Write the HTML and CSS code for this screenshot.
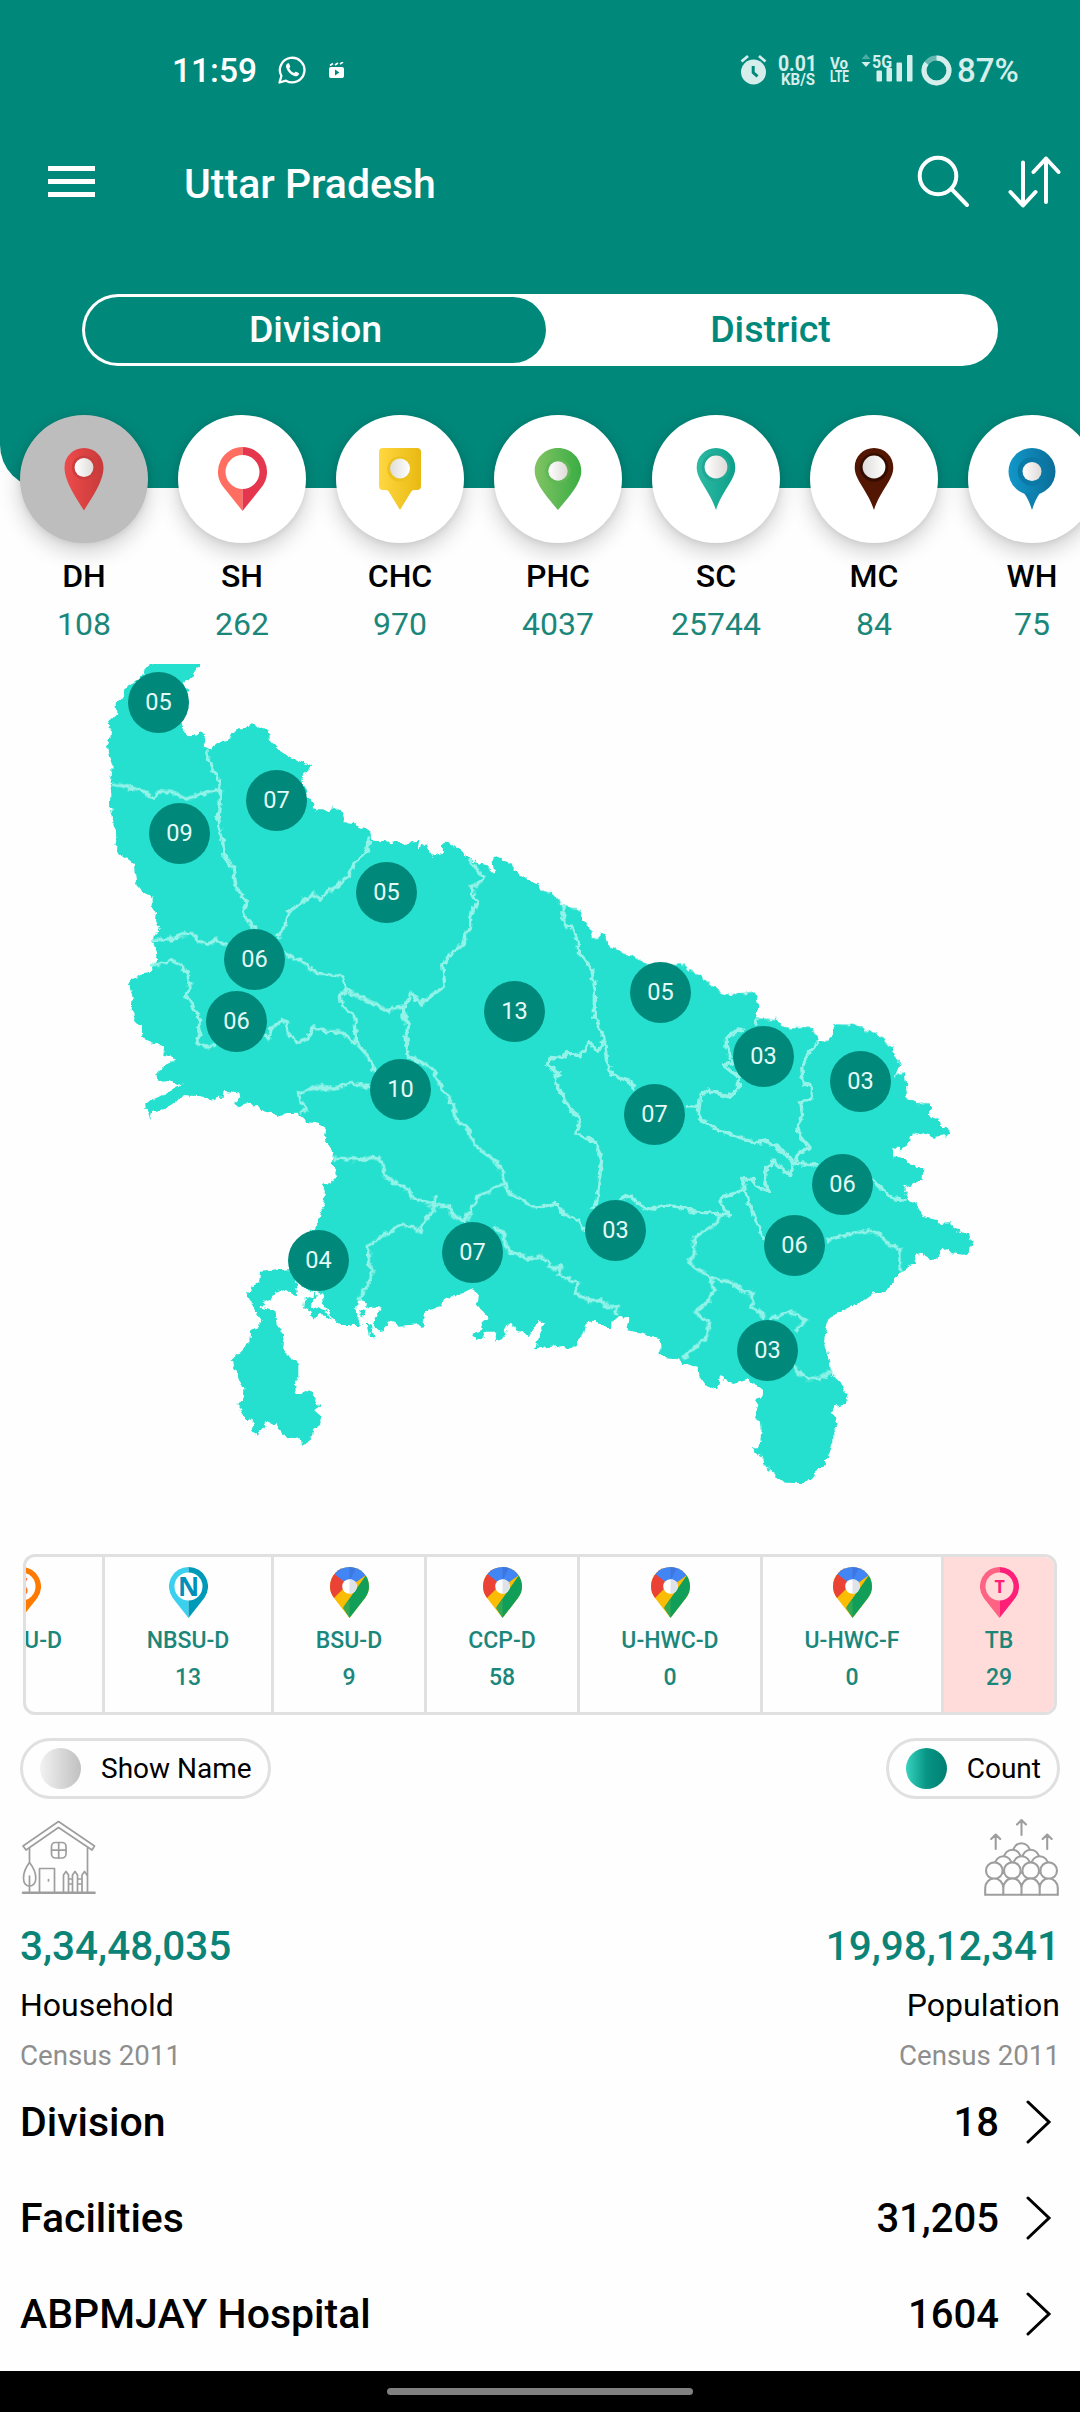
FILE: index.html
```html
<!DOCTYPE html>
<html lang="en">
<head>
<meta charset="utf-8">
<title>Uttar Pradesh</title>
<link rel="stylesheet" href="styles.css">
</head>
<body>
<svg class="defs" width="0" height="0" aria-hidden="true">
  <defs>
    <linearGradient id="red"><stop offset="0" stop-color="#ee4b4b"/><stop offset="1" stop-color="#c83a3a"/></linearGradient>
    <linearGradient id="yellow"><stop offset="0" stop-color="#ffd740"/><stop offset="1" stop-color="#e8b912"/></linearGradient>
    <linearGradient id="green"><stop offset="0" stop-color="#81c364"/><stop offset="1" stop-color="#3aad43"/></linearGradient>
    <linearGradient id="teal"><stop offset="0" stop-color="#2fbaa4"/><stop offset="1" stop-color="#0b9f8a"/></linearGradient>
    <linearGradient id="blue"><stop offset="0" stop-color="#1098c9"/><stop offset="1" stop-color="#0c6d99"/></linearGradient>
    <linearGradient id="pearl"><stop offset="0" stop-color="#fff"/><stop offset="1" stop-color="#dedbd8"/></linearGradient>
    <linearGradient id="pearlR"><stop offset="0" stop-color="#deddda"/><stop offset="1" stop-color="#fff"/></linearGradient>
    <clipPath id="gpinClip"><path d="M19.500 0C8.500 0 0 8.500 0 19.500C0 24 1.500 27.500 4 31L19.500 51L35 31C37.500 27.500 39 24 39 19.500C39 8.500 30.500 0 19.500 0Z"/></clipPath>
    <symbol id="gpin" viewBox="0 0 39 51">
      <g clip-path="url(#gpinClip)">
        <rect width="39" height="51" fill="#fbbc04"/>
        <path d="M0 0H10L19 16L3 32L0 30Z" fill="#ea4335"/>
        <path d="M5 7.500L14 14.500L21 19L36 8L30 0H5Z" fill="#4285f4"/>
        <path d="M19.500 0V14L26 1Z" fill="#3c78e0"/>
        <path d="M36.500 7.500L13.500 40L19.500 51L39 31V8Z" fill="#119e59"/>
        <path d="M19.500 33L13 41L19.500 51Z" fill="#34a853"/>
      </g>
      <circle cx="19.500" cy="19.500" r="7.300" fill="#fff"/>
      <path d="M19.500 12.200a7.300 7.300 0 0 1 0 14.600Z" fill="#dfe3e9"/>
    </symbol>
  </defs>
</svg>

<header class="header">
  <div class="status">
    <span class="time">11:59</span>
    <svg class="whatsapp" viewBox="0 0 28 28"><path d="M1.500 26.500L3.400 20A12.300 12.300 0 1 1 8 24.700Z" fill="none" stroke="#fff" stroke-width="2.300" stroke-linejoin="round"/><path d="M9.500 7.500c-1.400 1-1.800 2.300-1.300 4 1.200 4 4.300 7.100 8.300 8.600 1.800.6 3.500 0 4.300-1.600.3-.6.300-1.200-.2-1.500l-2.600-1.300c-.5-.2-.8 0-1.800 1.300-2.300-.9-4-2.600-5-4.800.8-.8 1.200-1.300 1-1.900l-1.200-2.700c-.3-.5-.9-.5-1.500-.1Z" fill="#fff"/></svg>
    <svg class="clapper" viewBox="0 0 15 16"><rect y="5" width="15" height="11" rx="2" fill="#fff"/><path d="M1 3.500l3-2M6 3l3-2M11 2l3-2" stroke="#fff" stroke-width="1.600"/><path d="M6 7.500V13.500L10.500 10.500Z" fill="#00897b"/></svg>
    <div class="sys">
      <svg width="28" height="32" viewBox="0 0 28 32"><circle cx="13.500" cy="18" r="12.500" fill="#d5eeeb"/><path d="M1.500 7.500L8 2M25.500 7.500L19 2" stroke="#d5eeeb" stroke-width="2.800"/><path d="M13.200 12v6.500l4.300 3.800" fill="none" stroke="#00897b" stroke-width="3"/></svg>
      <svg class="net" width="137" height="40" viewBox="0 0 137 40">
        <g fill="#d5eeeb">
          <text class="n1" x="0" y="21" textLength="39" lengthAdjust="spacingAndGlyphs">0.01</text>
          <text class="n2" x="3" y="35" textLength="34" lengthAdjust="spacingAndGlyphs">KB/S</text>
          <text class="n3" x="52" y="19" textLength="18" lengthAdjust="spacingAndGlyphs">Vo</text>
          <text class="n3" x="52" y="32" textLength="19" lengthAdjust="spacingAndGlyphs">LTE</text>
          <text class="n4" x="94" y="17.500" textLength="20" lengthAdjust="spacingAndGlyphs">5G</text>
          <path d="M83.500 12L92.500 12L88 17Z"/>
          <path d="M83.500 9L92.500 9L88 4Z" opacity=".35"/>
          <rect x="98.500" y="20.500" width="5.500" height="11" rx="1"/><rect x="108.500" y="18" width="5.500" height="13.500" rx="1"/><rect x="118.500" y="12.500" width="5.500" height="19" rx="1"/><rect x="129" y="5" width="5.500" height="26.500" rx="1"/>
        </g>
      </svg>
      <svg width="31" height="31" viewBox="0 0 31 31"><circle cx="15.500" cy="15.500" r="12.500" fill="none" stroke="#66b8b0" stroke-width="5"/><circle cx="15.500" cy="15.500" r="12.500" fill="none" stroke="#d5eeeb" stroke-width="5" pathLength="100" stroke-dasharray="85 15" transform="rotate(-90 15.500 15.500)"/></svg>
      <span class="battery">87%</span>
    </div>
  </div>
  <div class="appbar">
    <div class="menu"><i></i><i></i><i></i></div>
    <h1>Uttar Pradesh</h1>
    <svg class="search" viewBox="0 0 54 54"><circle cx="21" cy="21" r="18.300" fill="none" stroke="#fff" stroke-width="4"/><path d="M34.500 34L50 50" stroke="#fff" stroke-width="4" stroke-linecap="round"/></svg>
    <svg class="sort" viewBox="0 0 54 54"><path d="M15 7.500V50M2.500 37L15 50.500L27.500 37M38 47V3.500M25.500 17L38 3.500L50.500 17" fill="none" stroke="#fff" stroke-width="4" stroke-linecap="round" stroke-linejoin="round"/></svg>
  </div>
  <div class="segment"><span class="on">Division</span><span>District</span></div>
</header>

<nav class="types">
  <div class="type"><div class="disc selected"><svg viewBox="0 0 64 64"><path d="M32 1C21 1 12.500 9.500 12.500 20.500C12.500 35 25 52 32 63.500C39 52 51.500 35 51.500 20.500C51.500 9.500 43 1 32 1Z" fill="url(#red)"/><circle cx="32" cy="20.500" r="12" fill="#cb3d3d"/><circle cx="32" cy="20.500" r="9.400" fill="url(#pearl)"/></svg></div><b>DH</b><span>108</span></div>
  <div class="type"><div class="disc"><svg viewBox="0 0 64 64"><path d="M32.500 0A24.700 24.700 0 0 0 12.500 39L32.500 64Z" fill="#ff6e60"/><path d="M32.500 0A24.700 24.700 0 0 1 52.500 39L32.500 64Z" fill="#e4374e"/><circle cx="32.500" cy="25" r="17" fill="#fff"/></svg></div><b>SH</b><span>262</span></div>
  <div class="type"><div class="disc"><svg viewBox="0 0 64 64"><path d="M15 1H49Q53 1 53 5V39Q53 43 49 43H46Q44 43 43 45L32 63L21 45Q20 43 18 43H15Q11 43 11 39V5Q11 1 15 1Z" fill="url(#yellow)"/><circle cx="32" cy="22" r="12.800" fill="#edc11e"/><circle cx="32" cy="21.500" r="10" fill="url(#pearlR)"/></svg></div><b>CHC</b><span>970</span></div>
  <div class="type"><div class="disc"><svg viewBox="0 0 64 64"><path d="M32 1C19 1 8.700 11 8.700 24C8.700 37 23 52 32 63C41 52 55.300 37 55.300 24C55.300 11 45 1 32 1Z" fill="url(#green)"/><circle cx="32" cy="24" r="12.500" fill="#5fb855"/><circle cx="32" cy="24" r="9.700" fill="url(#pearl)"/></svg></div><b>PHC</b><span>4037</span></div>
  <div class="type"><div class="disc"><svg viewBox="0 0 64 64"><path d="M32 1C21 1 12.700 9.500 12.700 20.500C12.700 33 26 44 32 63C38 44 51.300 33 51.300 20.500C51.300 9.500 43 1 32 1Z" fill="url(#teal)"/><circle cx="32" cy="20.500" r="14.200" fill="#1fa893"/><circle cx="32" cy="20" r="11.400" fill="url(#pearl)"/></svg></div><b>SC</b><span>25744</span></div>
  <div class="type"><div class="disc"><svg viewBox="0 0 64 64"><path d="M32 1C21 1 12.700 9.500 12.700 20.500C12.700 33 26 44 32 63C38 44 51.300 33 51.300 20.500C51.300 9.500 43 1 32 1Z" fill="#521602"/><circle cx="32" cy="20.500" r="14.200" fill="#340d00"/><circle cx="32" cy="20" r="11.400" fill="url(#pearlR)"/></svg></div><b>MC</b><span>84</span></div>
  <div class="type"><div class="disc"><svg viewBox="0 0 64 64"><circle cx="32" cy="24.500" r="23.500" fill="url(#blue)"/><path d="M24 46Q29 53 32 63Q35 53 40 46Z" fill="#0e80af"/><circle cx="32" cy="24.500" r="14.300" fill="#0b79a6"/><circle cx="32" cy="24.500" r="9.500" fill="url(#pearl)"/></svg></div><b>WH</b><span>75</span></div>
</nav>

<section class="map">
  <svg width="1080" height="850" viewBox="0 664 1080 850">
    <defs>
      <filter id="rough" filterUnits="userSpaceOnUse" x="0" y="650" width="1080" height="870" color-interpolation-filters="sRGB">
        <feTurbulence type="fractalNoise" baseFrequency=".16" numOctaves="2" seed="4"/>
        <feDisplacementMap in="SourceGraphic" scale="7" xChannelSelector="R" yChannelSelector="G"/>
      </filter>
      <clipPath id="top"><rect x="0" y="664" width="1080" height="850"/></clipPath>
    </defs>
    <g clip-path="url(#top)">
    <g filter="url(#rough)">
      <g fill="#26e0cf">
        <path transform="translate(80 650) scale(.33333)" d="M228 20L376 20L340 75L312 96L330 150L303 225L325 260L362 243L378 270L368 292L393 300L402 285L450 264L462 238L490 238L515 223L565 240L570 270L600 305L635 325L697 348L668 375L668 395L685 440L708 480L750 482L760 470L790 490L795 520L825 522L870 540L877 572L912 574L922 566L930 580L960 575L978 588L1018 565L1014 598L1035 585L1060 620L1088 605L1090 578L1110 580L1145 605L1165 620L1185 637L1215 645L1243 672L1237 625L1260 620L1270 640L1295 650L1320 675L1345 692L1380 706L1380 1380L545 1380L525 1355L500 1360L478 1372L465 1362L485 1340L470 1328L430 1326L428 1340L408 1340L403 1358L390 1340L310 1335L295 1345L260 1365L218 1372L200 1380L195 1360L240 1340L275 1320L312 1300L290 1305L270 1292L245 1295L228 1272L262 1268L265 1250L285 1233L275 1220L250 1215L252 1190L225 1178L205 1175L187 1160L185 1125L168 1118L155 1080L158 1040L148 1010L142 995L185 970L210 965L230 935L232 915L225 890L217 870L225 850L240 832L225 810L228 790L218 770L218 740L185 725L170 705L165 670L160 640L125 615L108 600L112 570L102 540L98 500L90 460L92 400L98 350L85 310L80 285L92 262L92 240L82 228L97 205L112 190L110 165L130 135L140 110L160 100L190 75L195 60Z"/>
        <path transform="translate(500 800) scale(.33333)" d="M0 175L35 190L45 218L75 235L105 260L112 252L125 270L155 280L175 300L190 318L240 327L250 360L275 390L275 415L298 412L300 398L315 405L325 435L370 460L400 468L435 490L480 500L545 492L565 510L590 518L670 585L765 575L775 620L768 655L830 657L845 675L875 682L925 680L952 705L957 725L985 722L1002 700L1000 672L1070 675L1160 720L1160 735L1182 735L1175 755L1200 785L1188 825L1215 820L1222 895L1245 905L1255 915L1290 910L1290 955L1318 955L1325 985L1350 990L1340 1005L1300 1010L1235 997L1200 1000L0 1000Z"/>
        <path transform="translate(100 1060) scale(.33333)" d="M228 0L205 12L165 42L190 62L235 65L250 72L245 85L215 95L180 112L140 130L135 145L145 158L150 178L158 155L200 145L230 125L242 103L330 112L345 125L350 110L368 108L370 95L415 98L425 110L402 130L418 143L430 128L455 128L490 150L535 170L560 160L590 158L620 185L660 192L678 205L675 240L700 275L695 310L712 335L690 370L668 375L675 400L665 415L678 432L660 455L655 480L640 505L600 560L570 627L480 635L478 665L450 685L443 705L460 745L488 785L450 815L448 848L392 902L412 935L430 985L428 1020L415 1035L428 1065L462 1085L450 1108L470 1130L500 1083L530 1098L565 1138L600 1135L603 1160L630 1145L640 1110L660 1095L663 1068L642 1050L657 1040L645 1005L632 988L605 1005L588 1000L585 975L595 955L595 910L560 885L545 855L550 820L535 805L525 750L485 742L490 730L515 715L530 695L560 685L580 710L592 705L585 660L620 690L668 700L672 740L720 795L785 795L768 755L770 725L782 715L805 745L845 742L815 790L848 818L870 785L900 797L955 793L970 805L975 755L1020 742L1035 712L1065 712L1115 685L1135 700L1130 730L1170 775L1145 790L1148 808L1115 828L1145 838L1160 815L1195 815L1185 845L1205 838L1220 820L1210 805L1235 790L1245 810L1290 825L1305 800L1315 780L1340 790L1322 830L1305 865L1380 858L1380 0ZM615 720L650 700L632 740L680 755L700 785L675 765L655 762L640 782L635 755L612 745ZM780 745L800 750L795 775L778 768ZM800 790L815 795L812 820L828 830L808 835Z"/>
        <path transform="translate(540 1100) scale(.33333)" d="M-20 0L1110 0L1125 20L1165 10L1172 55L1195 60L1205 85L1228 90L1225 102L1185 110L1115 97L1110 130L1085 148L1058 145L1060 172L1100 178L1115 195L1150 205L1148 240L1120 250L1093 262L1105 300L1130 315L1150 350L1190 360L1200 372L1230 370L1235 385L1290 405L1300 435L1275 465L1235 460L1220 445L1205 448L1195 478L1160 475L1150 458L1125 468L1128 490L1075 520L1050 565L1025 578L1000 580L965 605L910 630L865 655L852 720L870 790L872 815L905 850L922 885L915 910L885 918L875 940L895 970L880 990L880 1025L865 1070L848 1100L832 1105L825 1130L790 1150L735 1148L690 1110L672 1095L670 1070L640 1055L638 1045L658 1045L665 990L662 960L645 955L655 915L645 900L672 885L658 860L620 840L580 852L540 832L532 868L500 858L480 830L470 800L430 790L415 778L375 775L362 760L360 715L260 690L265 655L235 648L215 665L212 688L160 662L138 670L132 705L115 715L110 735L92 750L70 735L-15 745L5 685L18 670L0 658Z"/>
      </g>
      <g class="borders">
        <path transform="translate(80 650) scale(.33333)" d="M95 402L140 410L185 422L220 442L245 422L278 428L318 448L355 435L395 422L422 424M380 300L385 330L405 370L422 415L420 460L413 510L425 560L435 620L460 655L468 710L500 755L488 785L505 815L530 838M868 560L862 605L830 630L805 680L770 708L720 745L697 732L655 765L622 788L615 830L595 862M218 870L285 865L300 855L338 850L355 872L385 883L410 868L440 885M210 945L240 942L272 930L308 948L325 975L330 1005L318 1035L340 1070L355 1100L360 1140L350 1180L370 1190L405 1185M552 1150L565 1170L575 1135L605 1110L620 1120L625 1150L655 1178L685 1165L700 1130L740 1145L778 1145L830 1180L870 1225L885 1265M618 912L660 930L710 970L785 980L805 1020L780 1035L785 1065L825 1105L830 1180M805 1025L860 1050L920 1082L965 1068L985 1120L978 1160L985 1220L1060 1255M1168 628L1185 650L1210 685L1195 705L1170 708L1190 760L1172 800L1172 835L1155 850L1150 880L1110 915L1088 945L1095 1010L1040 1045L1025 1062L992 1030L980 1060L968 1080L970 1110L985 1125M870 1310L810 1300L760 1315L700 1312L655 1328L660 1355L682 1378L660 1390"/>
        <path transform="translate(500 800) scale(.33333)" d="M190 318L188 350L200 380L215 382L235 425L235 455L275 505L283 560L283 650L312 715L320 780L335 825L385 840L405 868M312 720L292 755L268 725L240 768L200 758L188 775L150 772L142 795L180 820L160 830L200 910L240 960L228 1000L285 1025L305 1080L300 1120L290 1210L272 1230M105 1227L165 1210L190 1240L235 1260L255 1297M768 655L770 680M735 695L710 690L680 715L678 740L700 790L668 795L715 830L715 865L685 890L625 872L602 885L595 940L600 955L655 992L770 1028L800 1022L850 1055L880 1092M558 920L598 922M955 725L920 770L905 800L910 850L935 860L932 900L902 905L908 945L892 970L900 1010L930 1045L895 1055L885 1090L950 1095M880 1095L868 1125L820 1080L800 1105L795 1150L805 1170L775 1165L755 1138L725 1135L735 1160L705 1180L662 1190L668 1220L688 1245L640 1240L580 1235L540 1220L485 1218L440 1230L415 1210L385 1185L360 1200M735 1165L750 1220L770 1260L780 1300L795 1317M1120 1140L1175 1195L1220 1202"/>
        <path transform="translate(100 1060) scale(.33333)" d="M975 15L1000 30L1020 75L1060 135L1070 185L1100 200L1120 250L1160 285L1200 315L1212 368L1230 400L1270 420L1305 447M700 295L790 298L835 290L850 320L855 350L925 390L940 415L1000 435L1050 438L1055 465L1095 485M1212 368L1180 385L1135 410L1112 450L1095 490M1005 405L1000 455L965 490L960 515L935 500L900 495L865 520L820 545L805 560L805 610L820 635L800 680L775 720M1180 500L1212 520L1215 555L1230 575L1280 595L1320 590"/>
        <path transform="translate(540 1100) scale(.33333)" d="M0 470L25 485L35 505L65 500L55 525L115 550L105 580L145 600L185 600L195 620L235 618L225 645M540 345L525 375L465 410L462 465L445 490L510 530L580 550L610 575L640 578L632 625L665 635L670 658M510 530L520 570L505 605L465 635L505 670L505 705L430 775M690 658L745 635L800 660L765 695M768 800L770 815L800 835L840 835L875 815M860 420L920 405L985 392L1015 400L1045 430L1080 450L1080 515"/>
      </g>
    </g>
    </g>
  </svg>
  <span class="pin" style="left:159px;top:38px">05</span>
  <span class="pin" style="left:277px;top:136px">07</span>
  <span class="pin" style="left:180px;top:169px">09</span>
  <span class="pin" style="left:387px;top:228px">05</span>
  <span class="pin" style="left:255px;top:295px">06</span>
  <span class="pin" style="left:237px;top:357px">06</span>
  <span class="pin" style="left:515px;top:347px">13</span>
  <span class="pin" style="left:401px;top:425px">10</span>
  <span class="pin" style="left:661px;top:328px">05</span>
  <span class="pin" style="left:764px;top:392px">03</span>
  <span class="pin" style="left:861px;top:417px">03</span>
  <span class="pin" style="left:655px;top:450px">07</span>
  <span class="pin" style="left:843px;top:520px">06</span>
  <span class="pin" style="left:616px;top:566px">03</span>
  <span class="pin" style="left:795px;top:581px">06</span>
  <span class="pin" style="left:473px;top:588px">07</span>
  <span class="pin" style="left:319px;top:596px">04</span>
  <span class="pin" style="left:768px;top:686px">03</span>
</section>

<section class="units">
  <div class="unit cut"><svg viewBox="0 0 39 51"><path d="M19.500 0A19.500 19.500 0 0 0 3.700 31L19.500 51L35.300 31A19.500 19.500 0 0 0 19.500 0Z" fill="#ff7a00"/><circle cx="19.500" cy="19.500" r="14" fill="#fff"/><text class="mark" x="19.500" y="28.500" fill="#ff7a00">S</text></svg><b>U-D</b></div>
  <div class="unit w2"><svg viewBox="0 0 39 51"><path d="M19.500 0A19.500 19.500 0 0 0 3.700 31L19.500 51Z" fill="#3bd1ee"/><path d="M19.500 0A19.500 19.500 0 0 1 35.300 31L19.500 51Z" fill="#0099b8"/><circle cx="19.500" cy="19.500" r="14" fill="#fff"/><text class="mark" x="19.500" y="28.800" fill="#008fb8">N</text></svg><b>NBSU-D</b><b>13</b></div>
  <div class="unit w3"><svg><use href="#gpin"/></svg><b>BSU-D</b><b>9</b></div>
  <div class="unit w3"><svg><use href="#gpin"/></svg><b>CCP-D</b><b>58</b></div>
  <div class="unit w4"><svg><use href="#gpin"/></svg><b>U-HWC-D</b><b>0</b></div>
  <div class="unit w5"><svg><use href="#gpin"/></svg><b>U-HWC-F</b><b>0</b></div>
  <div class="unit w6 tb"><svg viewBox="0 0 39 51"><path d="M19.500 0A19.500 19.500 0 0 0 3.700 31L19.500 51Z" fill="#ff6384"/><path d="M19.500 0A19.500 19.500 0 0 1 35.300 31L19.500 51Z" fill="#ff1f78"/><circle cx="19.500" cy="19.500" r="14" fill="#ffdcda"/><text class="mark t" x="19.800" y="26" fill="#ff1f78">T</text></svg><b>TB</b><b>29</b></div>
</section>

<div class="toggles">
  <div class="toggle"><i></i>Show Name</div>
  <div class="toggle active"><i></i>Count</div>
</div>

<section class="stats">
  <div>
    <svg viewBox="20 1816 78 82" width="78" height="82"><g class="line"><path d="M23 1846L58.500 1821.500L94.500 1846L92 1850L58.500 1827.500L26 1850Z"/><path d="M29.500 1848V1862M29.500 1886V1892M87.500 1848V1892"/><rect x="51.500" y="1842.500" width="14.500" height="15.500" rx="4"/><path d="M58.700 1842.500V1858M51.500 1850.200H66"/><path d="M39.500 1892V1868.500H54.500V1892"/><path d="M29.500 1862.500C26 1867 23.500 1873 23.500 1878C23.500 1883 26 1886 29.500 1886S35.800 1883 35.800 1878C35.800 1873 33 1867 29.500 1862.500Z"/><path d="M29.500 1876V1886M63.500 1892V1875L66 1871.500L68.500 1875V1892M72.500 1892V1875L75 1871.500L77.500 1875V1892M82 1892V1875L84.500 1871.500L87 1875M68.500 1879H72.500M68.500 1884H72.500M77.500 1879H82M77.500 1884H82M48.500 1879.500V1881"/><path d="M23 1892.700H94.500" stroke-width="2.600"/></g></svg>
    <strong>3,34,48,035</strong><p>Household</p><small>Census 2011</small>
  </div>
  <div class="right">
    <svg viewBox="14 6 76 82" width="76" height="82"><g class="line people"><circle cx="51.500" cy="41.500" r="8.300"/><circle cx="42.300" cy="48" r="8.300"/><circle cx="60.700" cy="48" r="8.300"/><circle cx="33.300" cy="54.500" r="8.300"/><circle cx="51.700" cy="54.500" r="8.300"/><circle cx="69.700" cy="54.500" r="8.300"/><circle cx="24.300" cy="60.700" r="8.300"/><circle cx="42.300" cy="60.700" r="8.300"/><circle cx="60.700" cy="60.700" r="8.300"/><circle cx="78.700" cy="60.700" r="8.300"/><path d="M15.200 85V78A9 9.500 0 0 1 33.300 78V85M33.300 78A9 9.500 0 0 1 51.500 78V85M51.500 78A9 9.500 0 0 1 69.700 78V85M69.700 78A9 9.500 0 0 1 87.800 78V85M15.200 84.700H87.800"/><path d="M51.500 25V10M47 14.500L51.500 10L56 14.500M25.700 39V24.500M21.200 29L25.700 24.500L30.200 29M77.200 39V24.500M72.700 29L77.200 24.500L81.700 29" fill="none"/></g></svg>
    <strong>19,98,12,341</strong><p>Population</p><small>Census 2011</small>
  </div>
</section>

<section class="rows">
  <div class="row"><span>Division</span><span class="value">18</span><svg viewBox="0 0 26 44"><path d="M2 2L23 22L2 42"/></svg></div>
  <div class="row"><span>Facilities</span><span class="value">31,205</span><svg viewBox="0 0 26 44"><path d="M2 2L23 22L2 42"/></svg></div>
  <div class="row"><span>ABPMJAY Hospital</span><span class="value">1604</span><svg viewBox="0 0 26 44"><path d="M2 2L23 22L2 42"/></svg></div>
</section>

<footer class="navbar"><i></i></footer>
</body>
</html>
```
FILE: styles.css
```css
* { box-sizing: border-box; }

body {
  margin: 0;
  width: 1080px;
  height: 2412px;
  overflow: hidden;
  display: flex;
  flex-direction: column;
  background: #fefefe;
  color: #000;
  font-family: Roboto, "Liberation Sans", sans-serif;
}
body > * { flex: none; }
svg { display: block; }
b { font-weight: 500; }

.defs { height: 0; }

/* Header */
.header {
  height: 488px;
  background: #00897b;
  border-radius: 0 0 43px 43px;
  color: #fff;
}
.status {
  height: 140px;
  padding: 0 61px 0 172px;
  display: flex;
  align-items: center;
}
.time { font-size: 33.5px; font-weight: 500; width: 106px; }
.whatsapp { width: 28px; height: 28px; }
.clapper { width: 15px; height: 16px; margin-left: 23px; }
.sys { margin-left: auto; display: flex; align-items: center; }
.net { margin: 0 6px 0 10px; }
.net text { font-weight: 700; }
.n1 { font-size: 22px; }
.n2 { font-size: 17px; }
.n3 { font-size: 17px; }
.n4 { font-size: 18px; }
.battery { font-size: 33px; font-weight: 500; color: #d5eeeb; margin-left: 5px; width: 62px; }

.appbar {
  height: 84px;
  padding: 0 18px 0 48px;
  display: flex;
  align-items: center;
}
.menu { width: 47px; margin-top: -1px; display: grid; gap: 8px; }
.menu i { height: 5px; background: #fff; }
h1 { margin: 3px auto 0 89px; font-size: 41px; font-weight: 500; }
.search { width: 54px; height: 54px; margin-right: 37px; }
.sort { width: 54px; height: 54px; }

.segment {
  margin: 70px 82px 0;
  height: 72px;
  padding: 3px;
  border-radius: 36px;
  background: #fff;
  display: grid;
  grid-template-columns: 461px 1fr;
  font-size: 37.5px;
  font-weight: 500;
  line-height: 65px;
  text-align: center;
  color: #00897b;
}
.segment .on { background: #00897b; color: #fff; border-radius: 33px; }

/* Facility types */
.types { margin: -73px 0 0 5px; display: flex; }
.type {
  flex: none;
  width: 158px;
  display: flex;
  flex-direction: column;
  align-items: center;
  font-size: 32px;
  line-height: 48px;
}
.type span { color: #1b877b; }
.disc {
  width: 128px;
  height: 128px;
  margin-bottom: 9px;
  border-radius: 50%;
  background: #fff;
  box-shadow: 0 8px 22px rgba(0, 0, 0, .2), 0 1px 6px rgba(0, 0, 0, .08);
  display: grid;
  place-items: center;
}
.disc.selected { background: #bdbdbd; }
.disc svg { width: 64px; height: 64px; }

/* Map */
.map { position: relative; height: 890px; margin-top: 16px; }
.borders { fill: none; stroke: #93f3e9; stroke-width: 10; stroke-linejoin: round; }
.pin {
  position: absolute;
  width: 61px;
  height: 61px;
  margin: -30px 0 0 -31px;
  border-radius: 50%;
  background: #00897b;
  color: #e3fbf8;
  font-size: 23.5px;
  line-height: 60px;
  text-align: center;
}

/* Unit strip */
.units {
  margin: 0 23px;
  height: 161px;
  border: 3px solid #e0e0e0;
  border-radius: 12px;
  overflow: hidden;
  display: flex;
}
.unit {
  flex: none;
  border-right: 3px solid #e0e0e0;
  padding-top: 10px;
  display: flex;
  flex-direction: column;
  align-items: center;
  font-size: 23px;
  line-height: 37px;
  white-space: nowrap;
  color: #1b877b;
}
.unit svg { width: 39px; height: 51px; margin-bottom: 4px; }
.cut { width: 79px; align-items: flex-end; padding-right: 40px; overflow: hidden; }
.cut svg { margin-right: 21px; flex: none; }
.w2 { width: 169px; }
.w3 { width: 153px; }
.w4 { width: 183px; }
.w5 { width: 181px; }
.w6 { width: 110px; border: 0; }
.tb { background: #ffdcda; }
.mark { font: 700 26px "Open Sans", sans-serif; text-anchor: middle; }
.mark.t { font-size: 18px; }

/* Toggles */
.toggles { margin: 23px 20px 0; display: flex; justify-content: space-between; }
.toggle {
  height: 61px;
  padding: 0 16px 0 17px;
  border: 3px solid #e0e0e0;
  border-radius: 31px;
  display: flex;
  align-items: center;
  gap: 20px;
  font-size: 28px;
}
.toggle i { width: 41px; height: 41px; border-radius: 50%; background: linear-gradient(90deg, #f2f2f2, #c0c0c0); }
.toggle.active i { background: linear-gradient(90deg, #37d3bf, #079585 50%, #017f72); }

/* Census */
.stats { margin: 17px 20px 0; display: flex; justify-content: space-between; }
.stats .right { display: flex; flex-direction: column; align-items: flex-end; }
.stats strong { display: block; margin-top: 20px; font-size: 40.5px; font-weight: 500; line-height: 56px; color: #0b8477; }
.stats p { margin: 3px 0 0; font-size: 32px; line-height: 56px; }
.stats small { display: block; font-size: 27.7px; line-height: 46px; color: #8e8e8e; }
.line { fill: none; stroke: #9e9e9e; stroke-width: 1.7; stroke-linejoin: round; stroke-linecap: round; }
.people { fill: #fefefe; stroke-width: 2.1; }

/* Summary rows */
.rows { margin: -5px 28px 0 20px; }
.row { height: 96px; display: flex; align-items: center; font-size: 41px; font-weight: 500; }
.value { margin-left: auto; margin-right: 27px; font-size: 40px; }
.row svg { width: 26px; height: 44px; fill: none; stroke: #000; stroke-width: 3; stroke-linecap: round; }

.navbar { margin-top: auto; height: 41px; background: #000; display: grid; place-items: center; }
.navbar i { width: 306px; height: 7px; border-radius: 4px; background: #808080; }
```
